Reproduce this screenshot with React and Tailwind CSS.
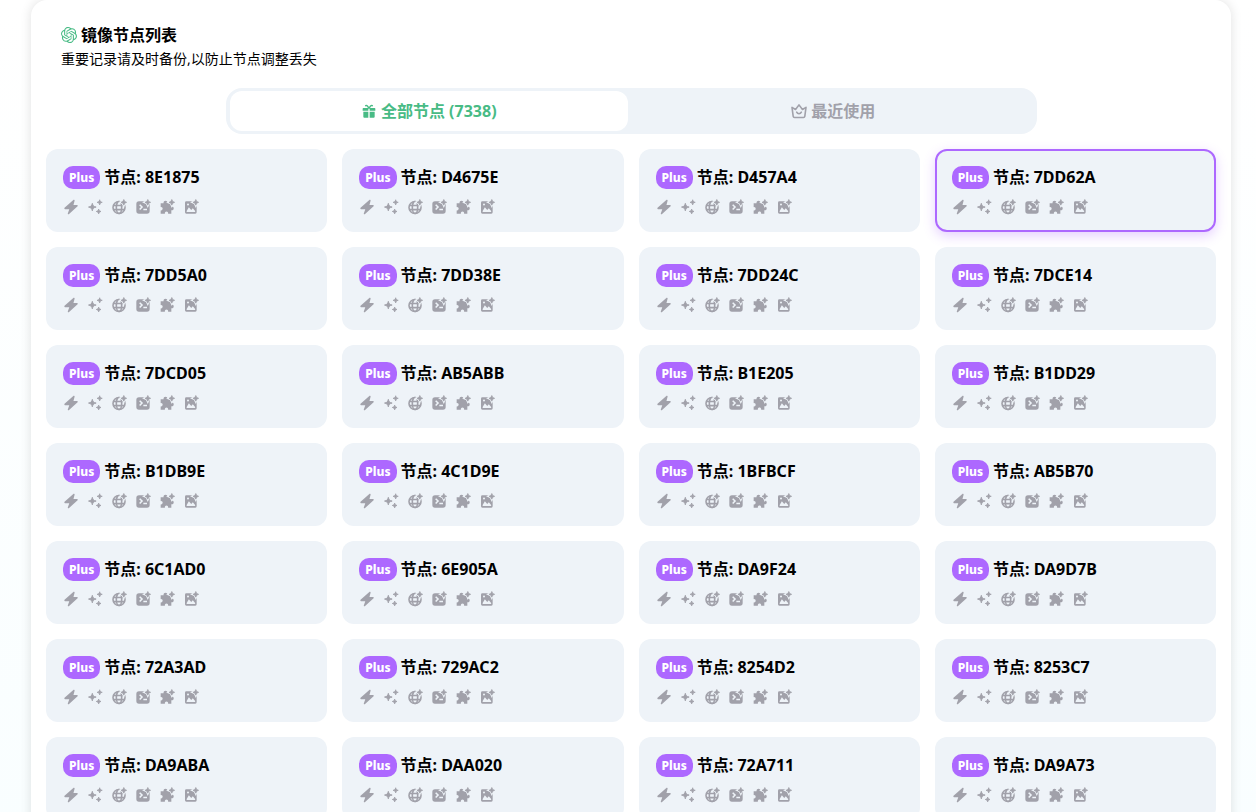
import { useState } from "react";
import { SiOpenai } from "react-icons/si";

const NODES = [
    "8E1875", "D4675E", "D457A4", "7DD62A",
    "7DD5A0", "7DD38E", "7DD24C", "7DCE14",
    "7DCD05", "AB5ABB", "B1E205", "B1DD29",
    "B1DB9E", "4C1D9E", "1BFBCF", "AB5B70",
    "6C1AD0", "6E905A", "DA9F24", "DA9D7B",
    "72A3AD", "729AC2", "8254D2", "8253C7",
    "DA9ABA", "DAA020", "72A711", "DA9A73",
];

function Icon({ children }) {
    return (
        <svg viewBox="0 0 24 24" className="size-4" fill="currentColor" aria-hidden="true">
            {children}
        </svg>
    );
}

// small star in the top right corner, with a ring of card colour around it
function Spark() {
    const d = "M19.200 0.800l1.300 2.900 2.900 1.300-2.900 1.300-1.300 2.900-1.300-2.900L15 5l2.900-1.300z";
    return (
        <>
            <path d={d} stroke="#eef3f8" strokeWidth="3.600" />
            <path d={d} stroke="currentColor" strokeWidth="1.200" strokeLinejoin="round" />
        </>
    );
}

function FlashIcon() {
    return (
        <Icon>
            <path d="M15.500 1.500 2.300 13.300c-.7.700-.3 1.900.8 1.900h6.300l-2.200 6.600c-.3 1 .8 1.600 1.500.9L21.900 11c.7-.7.2-1.900-.8-1.900h-5.400l1.700-6.500c.2-1-1.100-1.800-1.900-1.100z" />
        </Icon>
    );
}

function SparklesIcon() {
    return (
        <Icon>
            <g stroke="currentColor" strokeWidth="1.400" strokeLinejoin="round">
                <path d="M8 6.500c.9 3.900 1.900 4.800 5.700 5.600C9.900 13 8.900 14 8 17.800 7.100 14 6.100 13 2.300 12.100 6.100 11.300 7.100 10.400 8 6.500z" />
                <path d="M19 1.200c.5 2.500 1.300 3.300 3.800 3.800-2.500.5-3.300 1.300-3.800 3.800-.5-2.500-1.300-3.300-3.800-3.800 2.500-.5 3.300-1.300 3.800-3.800z" />
                <path d="M17.500 15.200c.5 2.200 1.300 3 3.500 3.500-2.200.5-3 1.300-3.500 3.500-.5-2.200-1.300-3-3.500-3.500 2.200-.5 3-1.300 3.500-3.500z" />
            </g>
        </Icon>
    );
}

function GlobeIcon() {
    return (
        <Icon>
            <g fill="none" stroke="currentColor" strokeWidth="2.400">
                <circle cx="12" cy="12.800" r="9" />
                <ellipse cx="12" cy="12.800" rx="4" ry="9" />
                <path d="M3.500 9.800h17M3.500 16h17" />
            </g>
            <Spark />
        </Icon>
    );
}

function TerminalIcon() {
    return (
        <Icon>
            <path
                fillRule="evenodd"
                d="M6 3.500h12a4 4 0 0 1 4 4V18a4 4 0 0 1-4 4H6a4 4 0 0 1-4-4V7.500a4 4 0 0 1 4-4zm.2 5.800 2.800 2.800-2.800 2.800 1.600 1.600 4.400-4.400-4.400-4.400zM12.500 14.800V17H18v-2.200z"
            />
            <Spark />
        </Icon>
    );
}

function PuzzleIcon() {
    return (
        <Icon>
            <path d="M6.800 6.500c-.6-5 6.600-5 6 0h5.700v4.800c4.800-.7 4.800 6.400 0 5.700V22h-4.800c.6-4.200-5.500-4.200-4.900 0H2.500v-4.800c4 .6 4-5.600 0-5V6.500z" />
            <Spark />
        </Icon>
    );
}

function PictureIcon() {
    return (
        <Icon>
            <path
                fillRule="evenodd"
                d="M5 3.500h13.500a2 2 0 0 1 2 2V20a2 2 0 0 1-2 2H5a2 2 0 0 1-2-2V5.500a2 2 0 0 1 2-2zM5.500 18v1.500h12.700V18l-3.500-4-2.400 2.600-3.500-4.400zM7.500 6.800a1.500 1.500 0 1 0 0 3 1.500 1.500 0 0 0 0-3z"
            />
            <Spark />
        </Icon>
    );
}

function GiftIcon() {
    return (
        <Icon>
            <path d="M3.500 7.500H11v4.200H2.500V8.500a1 1 0 0 1 1-1zM13 7.500h7.500a1 1 0 0 1 1 1v3.200H13zM3.500 13.200H11V22H5a1.500 1.500 0 0 1-1.500-1.500zM13 13.200h7.500v7.300A1.500 1.500 0 0 1 19 22h-6z" />
            <path d="M11.500 7.500C10.500 4.800 9 3.200 7 4M12.500 7.500c1-2.700 2.500-4.300 4.500-3.500" fill="none" stroke="currentColor" strokeWidth="2.200" strokeLinecap="round" />
        </Icon>
    );
}

function CrownIcon() {
    return (
        <Icon>
            <g fill="none" stroke="currentColor" strokeWidth="2.400" strokeLinejoin="round" strokeLinecap="round">
                <path d="M1.500 6.500 3.300 20a2 2 0 0 0 2 1.700h13.400a2 2 0 0 0 2-1.700l1.800-13.500-5.300 3.300-5.200-7-5.200 7z" />
                <path d="M8.500 13.800c1.500 3 5.500 3 7 0" />
            </g>
        </Icon>
    );
}

function NodeCard({ id, selected, onSelect }) {
    return (
        <button
            type="button"
            onClick={onSelect}
            className={`rounded-xl border-2 bg-[#eef3f8] p-[15px] text-left ${selected
                ? "border-[#ad68ff] shadow-[0_4px_12px_rgba(173,104,255,0.3)]"
                : "border-transparent"
                }`}
        >
            <span className="flex items-center gap-1">
                <span className="rounded-[10px] bg-[#ad68ff] px-1.5 text-xs leading-[23px] font-extrabold text-white">
                    Plus
                </span>
                <span className="text-base leading-[23px] font-bold text-black">节点: {id}</span>
            </span>
            <span className="mt-2.5 flex gap-2 text-[#a1a1aa]">
                <FlashIcon />
                <SparklesIcon />
                <GlobeIcon />
                <TerminalIcon />
                <PuzzleIcon />
                <PictureIcon />
            </span>
        </button>
    );
}

export default function App() {
    const [tab, setTab] = useState("all");
    const [selected, setSelected] = useState("7DD62A");

    const tabClass = (name) =>
        `flex h-10 flex-1 items-center justify-center gap-1 rounded-xl text-base font-bold ${tab === name
            ? "bg-white text-[#48bb85]"
            : "text-[#a1a1aa]"
        }`;

    return (
        <div className="min-h-screen bg-linear-to-b from-white to-[#f9feff] pr-[25px] pl-[31px] font-['Noto_Sans','Noto_Sans_CJK_SC',sans-serif] text-black">
            <main className="rounded-2xl bg-white p-[15px] shadow-[0_0_12px_rgba(0,0,0,0.12)]">
                {/* Header */}
                <header className="px-[15px] pt-2">
                    <h1 className="flex items-center gap-1 text-base leading-6 font-bold">
                        <SiOpenai className="size-4 text-[#48bb85]" aria-hidden="true" />
                        镜像节点列表
                    </h1>
                    <p className="text-sm leading-6">重要记录请及时备份,以防止节点调整丢失</p>
                </header>

                {/* Tabs */}
                <div className="mx-auto mt-[17px] flex w-[811px] max-w-full gap-1.5 rounded-2xl bg-[#eef3f8] px-1 py-[3px]">
                    <button type="button" onClick={() => setTab("all")} className={tabClass("all")}>
                        <GiftIcon />
                        全部节点 (7338)
                    </button>
                    <button type="button" onClick={() => setTab("recent")} className={tabClass("recent")}>
                        <CrownIcon />
                        最近使用
                    </button>
                </div>

                {/* Node list */}
                <div className="mt-[15px] grid grid-cols-4 gap-[15px]">
                    {NODES.map((id) => (
                        <NodeCard
                            key={id}
                            id={id}
                            selected={id === selected}
                            onSelect={() => setSelected(id)}
                        />
                    ))}
                </div>
            </main>
        </div>
    );
}
